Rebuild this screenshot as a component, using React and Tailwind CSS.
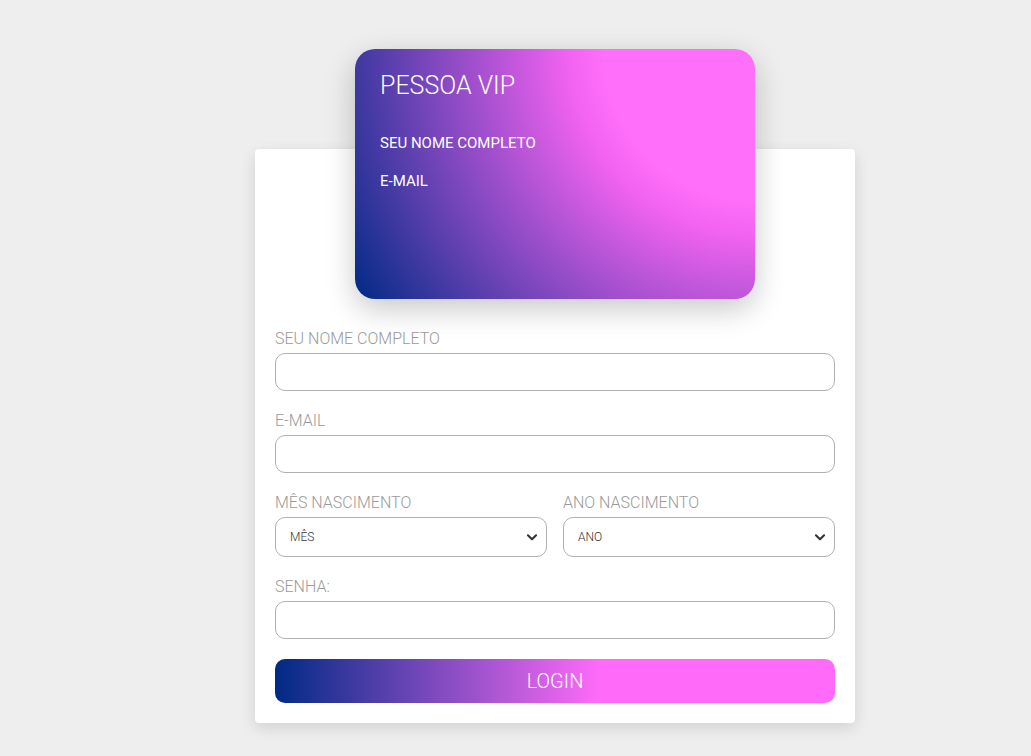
import React from 'react';

function Chevron() {
  return (
    <svg className="w-[14px] h-[14px] text-[#333]" viewBox="0 0 24 24" fill="none" stroke="currentColor" strokeWidth="3.5" strokeLinecap="round" strokeLinejoin="round">
      <path d="M5 9l7 7 7-7" />
    </svg>
  );
}

function Field({ label, type = 'text' }) {
  return (
    <div className="flex flex-col">
      <label className="pt-px text-[16px] leading-[24px] font-light text-[#9a9a9a] uppercase">{label}</label>
      <input
        type={type}
        className="mt-[2px] h-[38px] w-full rounded-[10px] border border-[#b0b0b0] bg-white px-3 text-[14px] outline-none"
      />
    </div>
  );
}

function SelectField({ label, placeholder }) {
  return (
    <div className="flex flex-col flex-1">
      <label className="pt-px text-[16px] leading-[24px] font-light text-[#9a9a9a] uppercase">{label}</label>
      <div className="relative mt-[2px]">
        <select className="appearance-none h-[40px] w-full rounded-[10px] border border-[#b0b0b0] bg-white pl-[14px] pr-8 text-[12px] font-light text-[#333] outline-none">
          <option>{placeholder}</option>
        </select>
        <span className="pointer-events-none absolute right-[8px] top-[13px]">
          <Chevron />
        </span>
      </div>
    </div>
  );
}

export default function App() {
  return (
    <div className="min-h-screen bg-[#eeeeee] pt-[49px] pl-[255px] font-['Roboto',sans-serif]">
      <div className="w-[600px]">
        {/* cartao vip */}
        <div className="relative z-10 mx-auto w-[400px] h-[250px] rounded-[20px] pl-[25px] pt-[23px] text-white shadow-[0_10px_30px_rgba(0,0,0,0.22)] bg-[radial-gradient(circle_at_top_right,#ff6ff9_32%,#f062f0_40%,#002a85_100%)]">
          <h2 className="text-[25px] leading-[28px] font-light">PESSOA VIP</h2>
          <p className="mt-[33px] text-[15px] leading-[20px]">SEU NOME COMPLETO</p>
          <p className="mt-[18px] text-[15px] leading-[20px]">E-MAIL</p>
        </div>

        {/* formulario */}
        <div className="-mt-[150px] bg-white rounded-[4px] px-[20px] pt-[177px] pb-[20px] shadow-[0_5px_15px_rgba(0,0,0,0.12)]">
          <div className="flex flex-col gap-[17px]">
            <Field label="Seu nome completo" />
            <Field label="E-mail" type="email" />
            <div className="flex gap-[16px]">
              <SelectField label="Mês nascimento" placeholder="MÊS" />
              <SelectField label="Ano nascimento" placeholder="ANO" />
            </div>
            <Field label="Senha:" type="password" />
          </div>
          <button className="mt-[20px] w-full h-[44px] rounded-[10px] text-white text-[20px] font-light bg-[linear-gradient(to_right,#002a85_0%,#ff6bf8_58%)]">
            LOGIN
          </button>
        </div>
      </div>
    </div>
  );
}
